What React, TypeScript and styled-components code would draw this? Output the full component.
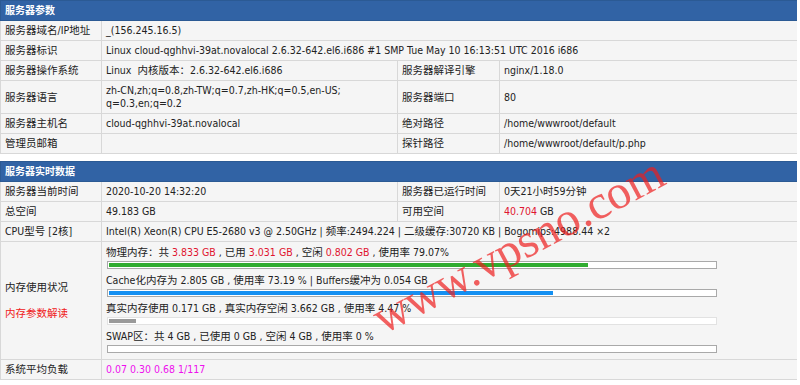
import React from 'react';
import styled, { createGlobalStyle } from 'styled-components';

// Types
interface MemLine {
  text: React.ReactNode;
  percent: number;
  color: string;
  light?: boolean;
}

const GlobalStyle = createGlobalStyle`
  html, body {
    margin: 0;
    padding: 0;
    background: #fff;
  }
  body {
    font-family: "DejaVu Sans Condensed", "DejaVu Sans", "Noto Sans CJK SC", sans-serif;
    font-stretch: condensed;
    font-size: 10.5px;
    color: #222;
  }
`;

// Styled Components
const Page = styled.div`
  position: relative;
  width: 797px;
  height: 385px;
  overflow: hidden;
`;

const Table = styled.table`
  width: 797px;
  border-collapse: collapse;
  table-layout: fixed;

  & + & {
    margin-top: 7px;
  }
`;

const Col = styled.col<{ $w: number }>`
  width: ${({ $w }) => $w}px;
`;

const Head = styled.th`
  background: #3163a5;
  border: 1px solid #2b5a94;
  color: #fff;
  font-weight: bold;
  font-size: 10px;
  text-align: left;
  padding: 3px 4px;
  line-height: 13px;
`;

const Cell = styled.td<{ $accent?: 'red' | 'magenta' }>`
  background: #f5f5f5;
  border: 1px solid #d8d8d8;
  padding: 3px 4px;
  line-height: 13px;
  vertical-align: middle;
  white-space: nowrap;
  overflow: hidden;
  color: ${({ $accent }) =>
    $accent === 'magenta' ? '#ee10ee' : $accent === 'red' ? '#ee1c1c' : '#222'};
`;

const MemCell = styled(Cell)`
  padding: 4px 4px 1px;
  vertical-align: top;
`;

const MemText = styled.div`
  height: 13px;
`;

const Red = styled.span`
  color: #e01530;
`;

const LinkText = styled.span`
  color: #f02020;
`;

const Bar = styled.div<{ $light?: boolean }>`
  width: 610px;
  height: 8px;
  box-sizing: border-box;
  margin: 2px 0 5px 1px;
  padding: 1px;
  background: #fff;
  border: 1px solid ${({ $light }) => ($light ? '#e2e2e2' : '#a9a9a9')};
`;

const Fill = styled.div<{ $color: string }>`
  height: 100%;
  background: ${({ $color }) => $color};
`;

const Watermark = styled.div`
  position: absolute;
  left: 357px;
  top: 221px;
  font-family: "Liberation Serif", "Times New Roman", serif;
  font-stretch: normal;
  font-size: 48px;
  line-height: 48px;
  color: rgba(238, 30, 30, 0.7);
  transform: rotate(-28deg);
  white-space: nowrap;
  pointer-events: none;
`;

const memLines: MemLine[] = [
  {
    text: (
      <>
        物理内存：共 <Red>3.833 GB</Red> , 已用 <Red>3.031 GB</Red> , 空闲 <Red>0.802 GB</Red> , 使用率 79.07%
      </>
    ),
    percent: 79.07,
    color: '#30ac30',
  },
  {
    text: 'Cache化内存为 2.805 GB , 使用率 73.19 % | Buffers缓冲为 0.054 GB',
    percent: 73.19,
    color: '#1490f2',
  },
  {
    text: '真实内存使用 0.171 GB , 真实内存空闲 3.662 GB , 使用率 4.47 %',
    percent: 4.47,
    color: '#9a9a9a',
    light: true,
  },
  {
    text: 'SWAP区：共 4 GB , 已使用 0 GB , 空闲 4 GB , 使用率 0 %',
    percent: 0,
    color: '#30ac30',
  },
];

const Columns: React.FC = () => (
  <colgroup>
    <Col $w={101} />
    <Col $w={296} />
    <Col $w={102} />
    <Col $w={298} />
  </colgroup>
);

export default function App() {
  return (
    <>
      <GlobalStyle />
      <Page>
        <Table>
          <Columns />
          <tbody>
            <tr>
              <Head colSpan={4}>服务器参数</Head>
            </tr>
            <tr>
              <Cell>服务器域名/IP地址</Cell>
              <Cell colSpan={3}>_(156.245.16.5)</Cell>
            </tr>
            <tr>
              <Cell>服务器标识</Cell>
              <Cell colSpan={3}>
                Linux cloud-qghhvi-39at.novalocal 2.6.32-642.el6.i686 #1 SMP Tue May 10 16:13:51 UTC 2016 i686
              </Cell>
            </tr>
            <tr>
              <Cell>服务器操作系统</Cell>
              <Cell>Linux &nbsp;内核版本：2.6.32-642.el6.i686</Cell>
              <Cell>服务器解译引擎</Cell>
              <Cell>nginx/1.18.0</Cell>
            </tr>
            <tr>
              <Cell>服务器语言</Cell>
              <Cell>
                zh-CN,zh;q=0.8,zh-TW;q=0.7,zh-HK;q=0.5,en-US;
                <br />
                q=0.3,en;q=0.2
              </Cell>
              <Cell>服务器端口</Cell>
              <Cell>80</Cell>
            </tr>
            <tr>
              <Cell>服务器主机名</Cell>
              <Cell>cloud-qghhvi-39at.novalocal</Cell>
              <Cell>绝对路径</Cell>
              <Cell>/home/wwwroot/default</Cell>
            </tr>
            <tr>
              <Cell>管理员邮箱</Cell>
              <Cell></Cell>
              <Cell>探针路径</Cell>
              <Cell>/home/wwwroot/default/p.php</Cell>
            </tr>
          </tbody>
        </Table>

        <Table>
          <Columns />
          <tbody>
            <tr>
              <Head colSpan={4}>服务器实时数据</Head>
            </tr>
            <tr>
              <Cell>服务器当前时间</Cell>
              <Cell>2020-10-20 14:32:20</Cell>
              <Cell>服务器已运行时间</Cell>
              <Cell>0天21小时59分钟</Cell>
            </tr>
            <tr>
              <Cell>总空间</Cell>
              <Cell>49.183 GB</Cell>
              <Cell>可用空间</Cell>
              <Cell>
                <Red>40.704</Red> GB
              </Cell>
            </tr>
            <tr>
              <Cell>CPU型号 [2核]</Cell>
              <Cell colSpan={3}>
                Intel(R) Xeon(R) CPU E5-2680 v3 @ 2.50GHz | 频率:2494.224 | 二级缓存:30720 KB | Bogomips:4988.44 ×2
              </Cell>
            </tr>
            <tr>
              <Cell>
                内存使用状况
                <br />
                <br />
                <LinkText>内存参数解读</LinkText>
              </Cell>
              <MemCell colSpan={3}>
                {memLines.map((line, i) => (
                  <div key={i}>
                    <MemText>{line.text}</MemText>
                    <Bar $light={line.light}>
                      <Fill $color={line.color} style={{ width: `${line.percent}%` }} />
                    </Bar>
                  </div>
                ))}
              </MemCell>
            </tr>
            <tr>
              <Cell>系统平均负载</Cell>
              <Cell colSpan={3} $accent="magenta">
                0.07 0.30 0.68 1/117
              </Cell>
            </tr>
          </tbody>
        </Table>

        <Watermark>www.vpsno.com</Watermark>
      </Page>
    </>
  );
}
